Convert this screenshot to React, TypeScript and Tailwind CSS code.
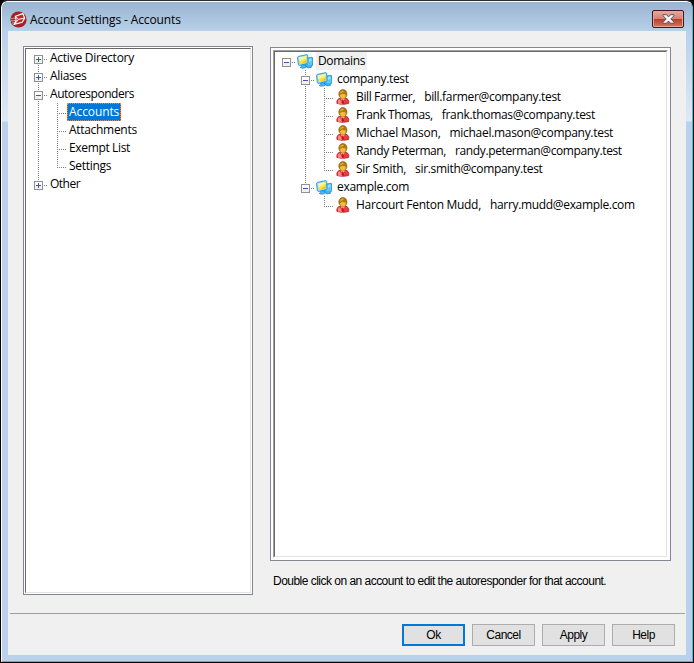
import type { ReactNode } from "react";

type Guide = "none" | "line" | "tee" | "end" | "plus" | "minus";

type Node = {
  label: string;
  guides: Guide[];
  top?: boolean;
  bottom?: boolean;
  icon?: "domain" | "user";
  email?: string;
  state?: "selected" | "inactive";
  spacing?: string;
  emailSpacing?: string;
};

const categories: Node[] = [
  { label: "Active Directory", guides: ["plus"], bottom: true, spacing: "tracking-[-0.25px]" },
  { label: "Aliases", guides: ["plus"], top: true, bottom: true, spacing: "tracking-[-0.3px]" },
  { label: "Autoresponders", guides: ["minus"], top: true, bottom: true, spacing: "tracking-[-0.46px]" },
  { label: "Accounts", guides: ["line", "tee"], state: "selected", spacing: "tracking-[-0.1px]" },
  { label: "Attachments", guides: ["line", "tee"], spacing: "tracking-[-0.3px]" },
  { label: "Exempt List", guides: ["line", "tee"], spacing: "tracking-[-0.35px]" },
  { label: "Settings", guides: ["line", "end"], spacing: "tracking-[-0.3px]" },
  { label: "Other", guides: ["plus"], top: true, spacing: "tracking-[-0.5px]" },
];

const accounts: Node[] = [
  { label: "Domains", guides: ["minus"], icon: "domain", state: "inactive", spacing: "tracking-[-0.4px]" },
  { label: "company.test", guides: ["none", "minus"], top: true, bottom: true, icon: "domain", spacing: "tracking-[-0.33px]" },
  {
    label: "Bill Farmer,",
    email: "bill.farmer@company.test",
    guides: ["none", "line", "tee"],
    icon: "user",
    spacing: "tracking-[-0.37px]",
    emailSpacing: "tracking-[-0.32px]",
  },
  {
    label: "Frank Thomas,",
    email: "frank.thomas@company.test",
    guides: ["none", "line", "tee"],
    icon: "user",
    spacing: "tracking-[-0.43px]",
    emailSpacing: "tracking-[-0.32px]",
  },
  {
    label: "Michael Mason,",
    email: "michael.mason@company.test",
    guides: ["none", "line", "tee"],
    icon: "user",
    spacing: "tracking-[-0.2px]",
    emailSpacing: "tracking-[-0.3px]",
  },
  {
    label: "Randy Peterman,",
    email: "randy.peterman@company.test",
    guides: ["none", "line", "tee"],
    icon: "user",
    spacing: "tracking-[-0.4px]",
    emailSpacing: "tracking-[-0.38px]",
  },
  {
    label: "Sir Smith,",
    email: "sir.smith@company.test",
    guides: ["none", "line", "end"],
    icon: "user",
    spacing: "tracking-[-0.3px]",
    emailSpacing: "tracking-[-0.33px]",
  },
  { label: "example.com", guides: ["none", "minus"], top: true, icon: "domain", spacing: "tracking-[-0.28px]" },
  {
    label: "Harcourt Fenton Mudd,",
    email: "harry.mudd@example.com",
    guides: ["none", "none", "end"],
    icon: "user",
    spacing: "tracking-[-0.3px]",
    emailSpacing: "tracking-[-0.33px]",
  },
];

function GuideCell({ kind, top, bottom }: { kind: Guide; top?: boolean; bottom?: boolean }) {
  const box = kind === "plus" || kind === "minus";
  const up = box ? top : kind !== "none";
  const down = box ? bottom : kind === "line" || kind === "tee";
  return (
    <svg width="19" height="18" viewBox="0 0 19 18" className="block shrink-0" shapeRendering="crispEdges">
      <g stroke="#808080" strokeDasharray="1 1" fill="none">
        {up && <path d="M9.5 0V11" />}
        {down && <path d="M9.5 10V18" />}
        {(kind === "tee" || kind === "end") && <path d="M9 10.5H19" />}
        {box && <path d="M15 10.5H19" />}
      </g>
      {box && (
        <>
          <rect x="5.5" y="6.5" width="8" height="8" fill="#f0f0f0" stroke="#919191" />
          <path d="M6 7H13V10H6Z" fill="#fff" />
          <path d={kind === "plus" ? "M7 10.5H12M9.5 8V13" : "M7 10.5H12"} stroke="#3c57a5" />
        </>
      )}
    </svg>
  );
}

function DomainIcon() {
  return (
    <svg width="16" height="16" viewBox="0 0 16 16" className="block">
      <path d="m8.5 4.4 6.5-1.2.7.6v7.4l-1.6.9.4 1.2-3.4.6-2.6-1.6Z" fill="#3fb4f0" stroke="#0a86cb" strokeWidth=".7" />
      <path d="m11.4 4.9 3.2-.6v5.9l-3.2.9Z" fill="#9fe4ff" />
      <path d="m11.4 8.6 3.2-2.2v3.8l-3.2.9Z" fill="#5cc6f6" />
      <path d="M.5 3.3 1.3 2.4 9.9.6l.8.7.3 7.4-1 1-7.4 1.8-1.3-.7Z" fill="#8edcff" stroke="#078ed9" strokeWidth=".8" />
      <path d="m2 3.6 7.4-1.6.2 6.2-6.8 1.7Z" fill="#ffe23a" />
      <path d="m2 3.6 7.4-1.6.1 2-7.2 3.3Z" fill="#fff59b" />
      <path d="m5 9.3 4.5-3.6.1 2.5Z" fill="#f5c01c" />
      <path d="m4.6 11.4 2.8-.7.7 1.2 1.6.5-1.2 1.4-3.2.5-2.2-.9 1.8-.8Z" fill="#4fb9f0" stroke="#0875b9" strokeWidth=".6" />
    </svg>
  );
}

function UserIcon() {
  return (
    <svg width="16" height="16" viewBox="0 0 16 16" className="block">
      <path d="M1.9 14.4c-.5-3.2 1.2-5 3.6-5.4h4.6c2.6.4 4.2 2.4 3.6 5.4-3.1 1.1-8.7 1.1-11.8 0Z" fill="#e83d3d" stroke="#b21e28" strokeWidth=".8" />
      <path d="m3.1 11.3 1.7-1 2.5 4.4H3Z" fill="#ff8c84" />
      <path d="m5.9 9.4 1.9 3.4L9.8 9.4Z" fill="#ffe9e4" />
      <path d="m7.3 10.2 1 0 .7 3.7-1.2.8-1.1-.8Z" fill="#bd1420" />
      <ellipse cx="7.9" cy="5" rx="4.1" ry="4.5" fill="#b0780e" stroke="#8a5c00" strokeWidth=".6" />
      <path d="M5 6 7.4 4.8l3.4.6c0 2.6-1 4.3-2.9 4.3S4.9 8.4 5 6Z" fill="#f2bc3a" />
      <path d="M5.2 2.8 7.7 1.5l1.3 1-3.6 2.1Z" fill="#dcae38" />
    </svg>
  );
}

function AppIcon() {
  return (
    <svg width="17" height="17" viewBox="0 0 17 17" className="block">
      <circle cx="8.5" cy="8.5" r="8.1" fill="#a81f28" />
      <path d="m5.4 5.2 7.4-2.6 1.9 4.5-2.5 4.2-8 2.1 1.9-4.2Z" fill="#b92932" stroke="#fff" strokeWidth="1.2" />
      <path d="m5.6 5.4 2.9 3 6-1.4M4.4 13.2l4.1-4.8" fill="none" stroke="#fff" strokeWidth="1" />
      <path d="M1.2 7.6 5.5 7M1 9.8l4.6-.3M2 12l2.8-.3" stroke="#f0cdd0" strokeWidth=".7" />
    </svg>
  );
}

function TreeRow({ node }: { node: Node }) {
  const last = node.guides.length - 1;
  const tone =
    node.state === "selected"
      ? "bg-[#0078d7] text-white outline-1 -outline-offset-1 outline-dotted outline-[#ff8728]"
      : node.state === "inactive"
        ? "bg-[#f0f0f0]"
        : "";
  return (
    <div className="flex h-[18px]">
      {node.guides.map((g, i) => (
        <GuideCell key={i} kind={g} top={i === last && node.top} bottom={i === last && node.bottom} />
      ))}
      {node.icon && (
        <span className={`ml-px mr-[3px] w-4 shrink-0 ${node.icon === "domain" ? "pt-[2px]" : "pt-px"}`}>
          {node.icon === "domain" ? <DomainIcon /> : <UserIcon />}
        </span>
      )}
      <span className={`flex h-[18px] whitespace-pre px-[2px] leading-[17px] ${tone}`}>
        <span className={node.spacing}>{node.label}</span>
        {node.email && <span className={`ml-[9px] ${node.emailSpacing}`}>{node.email}</span>}
      </span>
    </div>
  );
}

function PushButton({ children, primary }: { children: ReactNode; primary?: boolean }) {
  return (
    <button
      className={`flex h-[22px] w-[63px] items-center justify-center bg-[#e1e1e1] ${primary ? "border-2 border-[#0078d7]" : "border border-[#adadad]"}`}
    >
      {children}
    </button>
  );
}

export default function App() {
  return (
    <div className="h-[663px] w-[694px] bg-black font-['Open_Sans',sans-serif] text-[12px] text-black">
      <div className="flex h-[663px] w-[694px] flex-col overflow-hidden rounded-t-[7px] border border-black border-t-[#2b2b32]">
        <div className="flex h-[661px] w-[692px] flex-col rounded-t-[6px] border border-b-[#35c3dc] border-l-white border-r-[#35c3dc] border-t-white bg-[linear-gradient(to_bottom,#99b4d1_0px,#b9d1ea_30px,#dfe9f5_119px,#b9d1ea_120px)] px-[6px] pb-[6px]">
          <header className="flex h-[29px] shrink-0 items-start px-[2px]">
            <div className="pt-[9px]">
              <AppIcon />
            </div>
            <h1 className="ml-[3px] pt-[9px] leading-[18px] tracking-[-0.12px]">Account Settings - Accounts</h1>
            <button
              aria-label="Close"
              className="ml-auto mt-2 flex h-[18px] w-8 items-center justify-center rounded-[2px] border border-[#431422] bg-[linear-gradient(to_bottom,#e9a99f_0%,#d98074_48%,#bb3d25_50%,#d27560_100%)] shadow-[inset_0_0_0_1px_#e9a598]"
            >
              <svg width="13" height="10" viewBox="0 0 13 10">
                <path d="M1 .7h3.4l2.1 2.2L8.6.7H12v1L8.8 5 12 8.3v1H8.6L6.5 7.1 4.4 9.3H1v-1L4.2 5 1 1.7Z" fill="#f7f7f7" stroke="#535666" strokeWidth="1" />
              </svg>
            </button>
          </header>

          <div className="flex min-h-0 flex-1 flex-col bg-[#f0f0f0]">
            <main className="flex h-[582px] shrink-0 pl-[15px] pt-[15px]">
              <nav className="h-[549px] w-[230px] border border-[#828790] bg-white p-px">
                <div className="h-full border border-b-[#e3e3e3] border-l-[#696969] border-r-[#e3e3e3] border-t-[#696969] pl-[3px]">
                  {categories.map((n) => (
                    <TreeRow key={n.label} node={n} />
                  ))}
                </div>
              </nav>
              <section className="ml-[17px] mt-px w-[401px]">
                <div className="h-[514px] border border-[#828790] bg-white p-[2px]">
                  <div className="h-full border border-b-white border-l-[#a0a0a0] border-r-white border-t-[#a0a0a0]">
                    <div className="h-full border border-b-[#e3e3e3] border-l-[#696969] border-r-[#e3e3e3] border-t-[#696969] pl-[2px]">
                      {accounts.map((n) => (
                        <TreeRow key={n.label} node={n} />
                      ))}
                    </div>
                  </div>
                </div>
                <p className="ml-[3px] mt-[12px] whitespace-nowrap font-['Liberation_Sans',sans-serif] text-[12px] leading-[16px] tracking-[-0.52px]">
                  Double click on an account to edit the autoresponder for that account.
                </p>
              </section>
            </main>
            <footer className="ml-[2px] mr-px flex gap-[7px] border-t border-[#a0a0a0] pl-[392px] pt-[10px] font-['Liberation_Sans',sans-serif] tracking-[-0.5px]">
              <PushButton primary>Ok</PushButton>
              <PushButton>Cancel</PushButton>
              <PushButton>Apply</PushButton>
              <PushButton>Help</PushButton>
            </footer>
          </div>
        </div>
      </div>
    </div>
  );
}
